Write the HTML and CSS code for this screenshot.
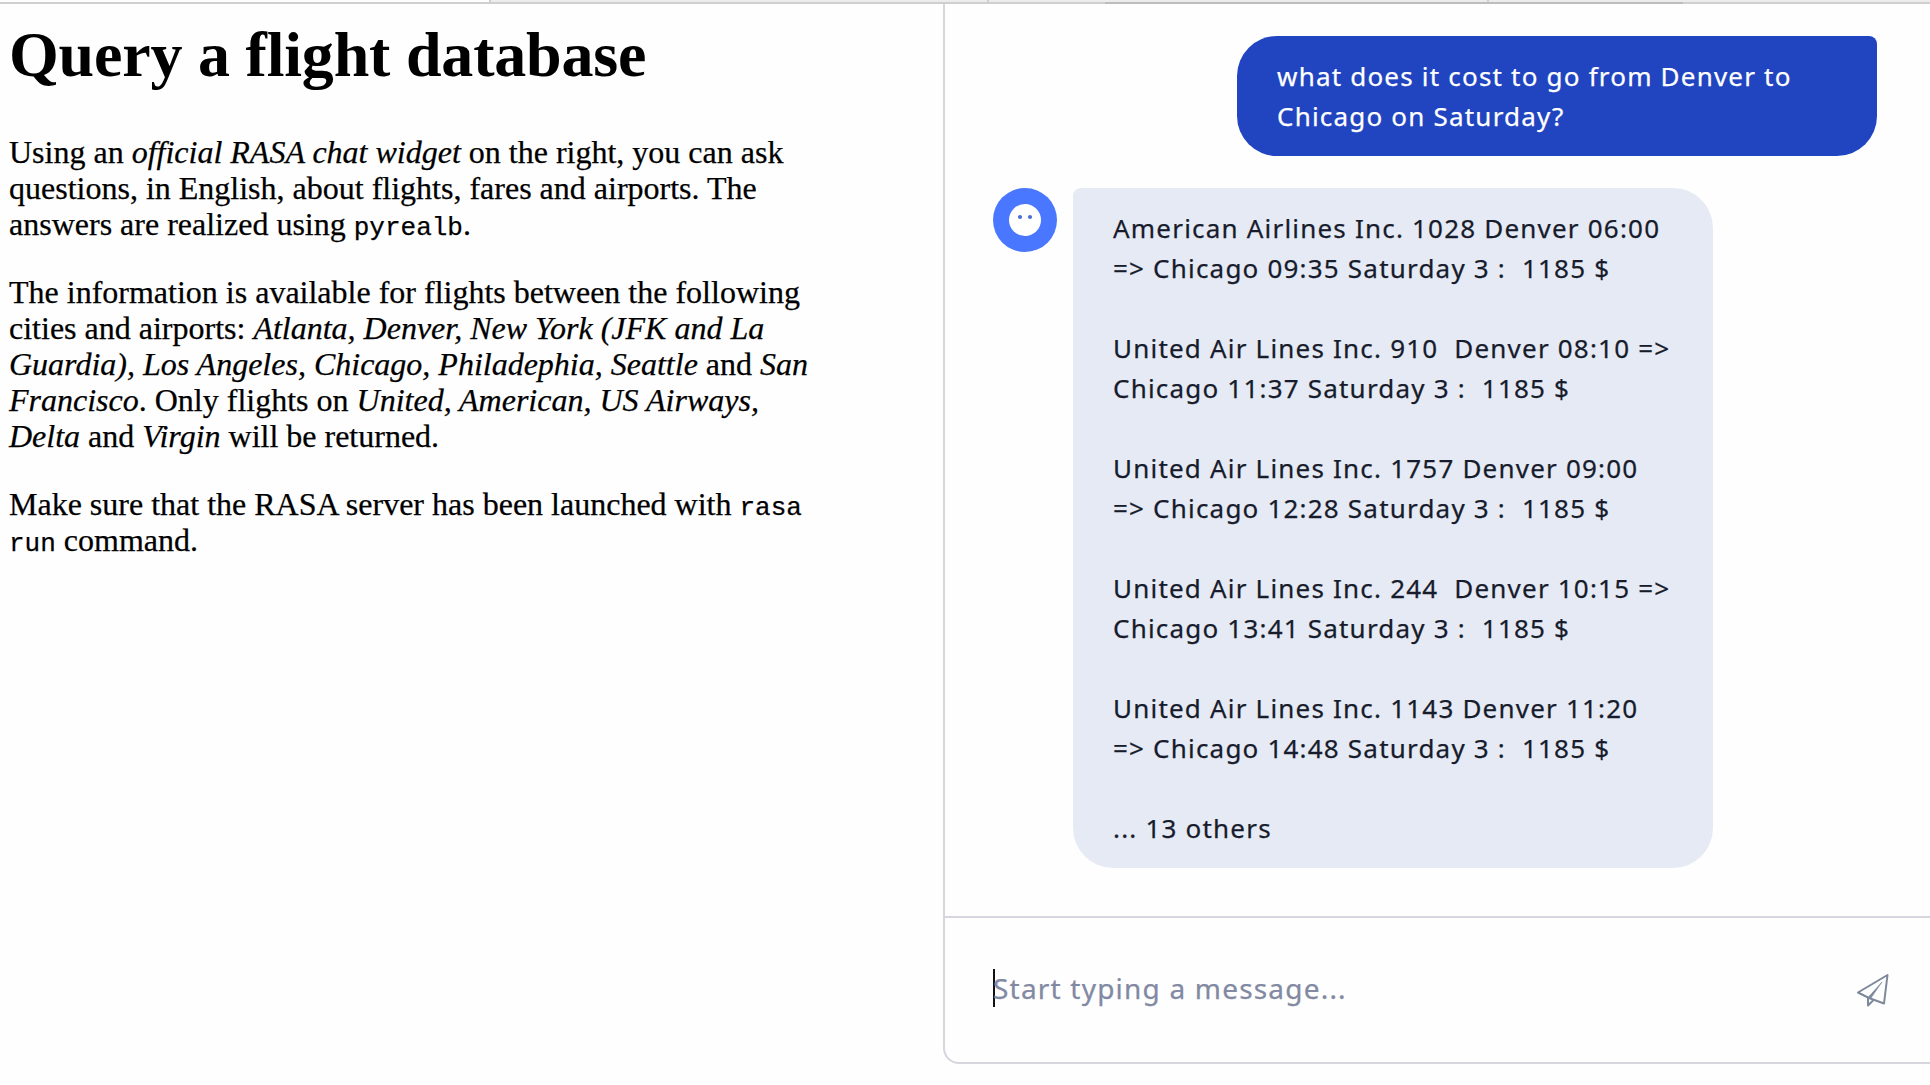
FILE: index.html
```html
<!DOCTYPE html>
<html lang="en">
<head>
<meta charset="utf-8">
<title>Query a flight database</title>
<link rel="stylesheet" href="styles.css">
</head>
<body>
<div class="tabstrip"><i class="tab tab-active"></i><i class="tab tab-b"></i><i class="tab tab-c"></i><i class="tab tab-d"></i></div>
<div class="page">
<main class="intro">
<h1>Query a flight database</h1>
<p>Using an <em>official RASA chat widget</em> on the right, you can ask<br>questions, in English, about flights, fares and airports. The<br>answers are realized using <code>pyrealb</code>.</p>
<p>The information is available for flights between the following<br>cities and airports: <em>Atlanta, Denver, New York (JFK and La<br>Guardia), Los Angeles, Chicago, Philadephia, Seattle</em> and <em>San<br>Francisco</em>. Only flights on <em>United, American, US Airways,<br>Delta</em> and <em>Virgin</em> will be returned.</p>
<p>Make sure that the RASA server has been launched with <code>rasa<br>run</code> command.</p>
</main>
<section class="chat">
<div class="messages">
<div class="bubble user">what does it cost to go from Denver to<br>Chicago on Saturday?</div>
<div class="bot-row">
<svg class="avatar" viewBox="0 0 64 64"><circle cx="32" cy="32" r="32" fill="#4a77ff"/><circle cx="32" cy="32" r="16" fill="#fff"/><circle cx="27" cy="29" r="2.1" fill="#4a6fd8"/><circle cx="37" cy="29" r="2.1" fill="#4a6fd8"/></svg>
<div class="bubble bot">American Airlines Inc. 1028 Denver 06:00
=&gt; Chicago 09:35 Saturday 3 :  1185 $

United Air Lines Inc. 910  Denver 08:10 =&gt;
Chicago 11:37 Saturday 3 :  1185 $

United Air Lines Inc. 1757 Denver 09:00
=&gt; Chicago 12:28 Saturday 3 :  1185 $

United Air Lines Inc. 244  Denver 10:15 =&gt;
Chicago 13:41 Saturday 3 :  1185 $

United Air Lines Inc. 1143 Denver 11:20
=&gt; Chicago 14:48 Saturday 3 :  1185 $

... 13 others</div>
</div>
</div>
<div class="composer">
<span class="caret"></span><span class="placeholder">Start typing a message...</span>
<svg class="send" viewBox="0 0 34 34" fill="none" stroke="#7d899b" stroke-width="2" stroke-linejoin="round"><path d="M2 19.5 31.5 2 28 30.500 13 25Z"/><path d="M12 24.500V32.500L17.500 27"/><path d="M12 24.500 26 9 15 25Z" fill="#7d899b" stroke-width=".6"/></svg>
</div>
</section>
</div>
</body>
</html>
```
FILE: styles.css
```css
* { box-sizing: border-box; }
body { margin: 0; height: 1085px; overflow: hidden; background: #fefefe; color: #000; display: flex; flex-direction: column; }
.tabstrip { height: 4px; flex: none; display: flex; padding-bottom: 2px; background: linear-gradient(#bdbdbd, #bdbdbd) 1105px 2px / 578px 2px no-repeat, linear-gradient(#cfcfcf, #cfcfcf) 0 2px / 100% 2px no-repeat, #ececec; }
.tab { border-right: 2px solid #cfcfcf; }
.tab-active { width: 491px; background: #fefefe; }
.tab-b { width: 498px; }
.tab-c { width: 500px; }
.tab-d { border: 0; flex: 1; }
.page { flex: 1; display: flex; }
.intro { width: 943px; flex: none; padding: 15px 0 0 9px; font: 32px/36px "Liberation Serif", serif; white-space: nowrap; -webkit-text-stroke: .25px; }
h1 { margin: 0 0 43px; font-size: 64px; line-height: 72px; font-weight: bold; letter-spacing: -.2px; -webkit-text-stroke: 0; }
p { margin: 0 0 32px; }
code { font: 26px/0 "Liberation Mono", monospace; }
.chat { flex: 1; height: 1060px; border: solid #d5d6de; border-width: 0 0 2px 2px; border-bottom-left-radius: 16px; display: flex; flex-direction: column; font: 26px/40px "Noto Sans", sans-serif; letter-spacing: 1.2px; -webkit-text-stroke: .25px; }
.messages { flex: 1; padding: 32px 53px 0 48px; display: flex; flex-direction: column; gap: 32px; }
.bubble { width: 640px; padding: 20px 40px; white-space: pre; }
.user { align-self: flex-end; background: #2145c0; color: #fff; border-radius: 40px 8px 40px 40px; }
.bot-row { display: flex; gap: 16px; }
.avatar { width: 64px; height: 64px; flex: none; }
.bot { background: #e6eaf5; color: #171c2c; border-radius: 8px 40px 40px 40px; }
.composer { height: 146px; border-top: 2px solid #d5d6de; padding: 0 40px 5px 48px; display: flex; align-items: center; }
.caret { width: 2px; height: 38px; background: #111; margin-right: -2px; }
.placeholder { font-size: 28px; color: #8289a3; letter-spacing: 1.2px; flex: 1; }
.send { width: 34px; height: 34px; margin-top: 4px; }
```
